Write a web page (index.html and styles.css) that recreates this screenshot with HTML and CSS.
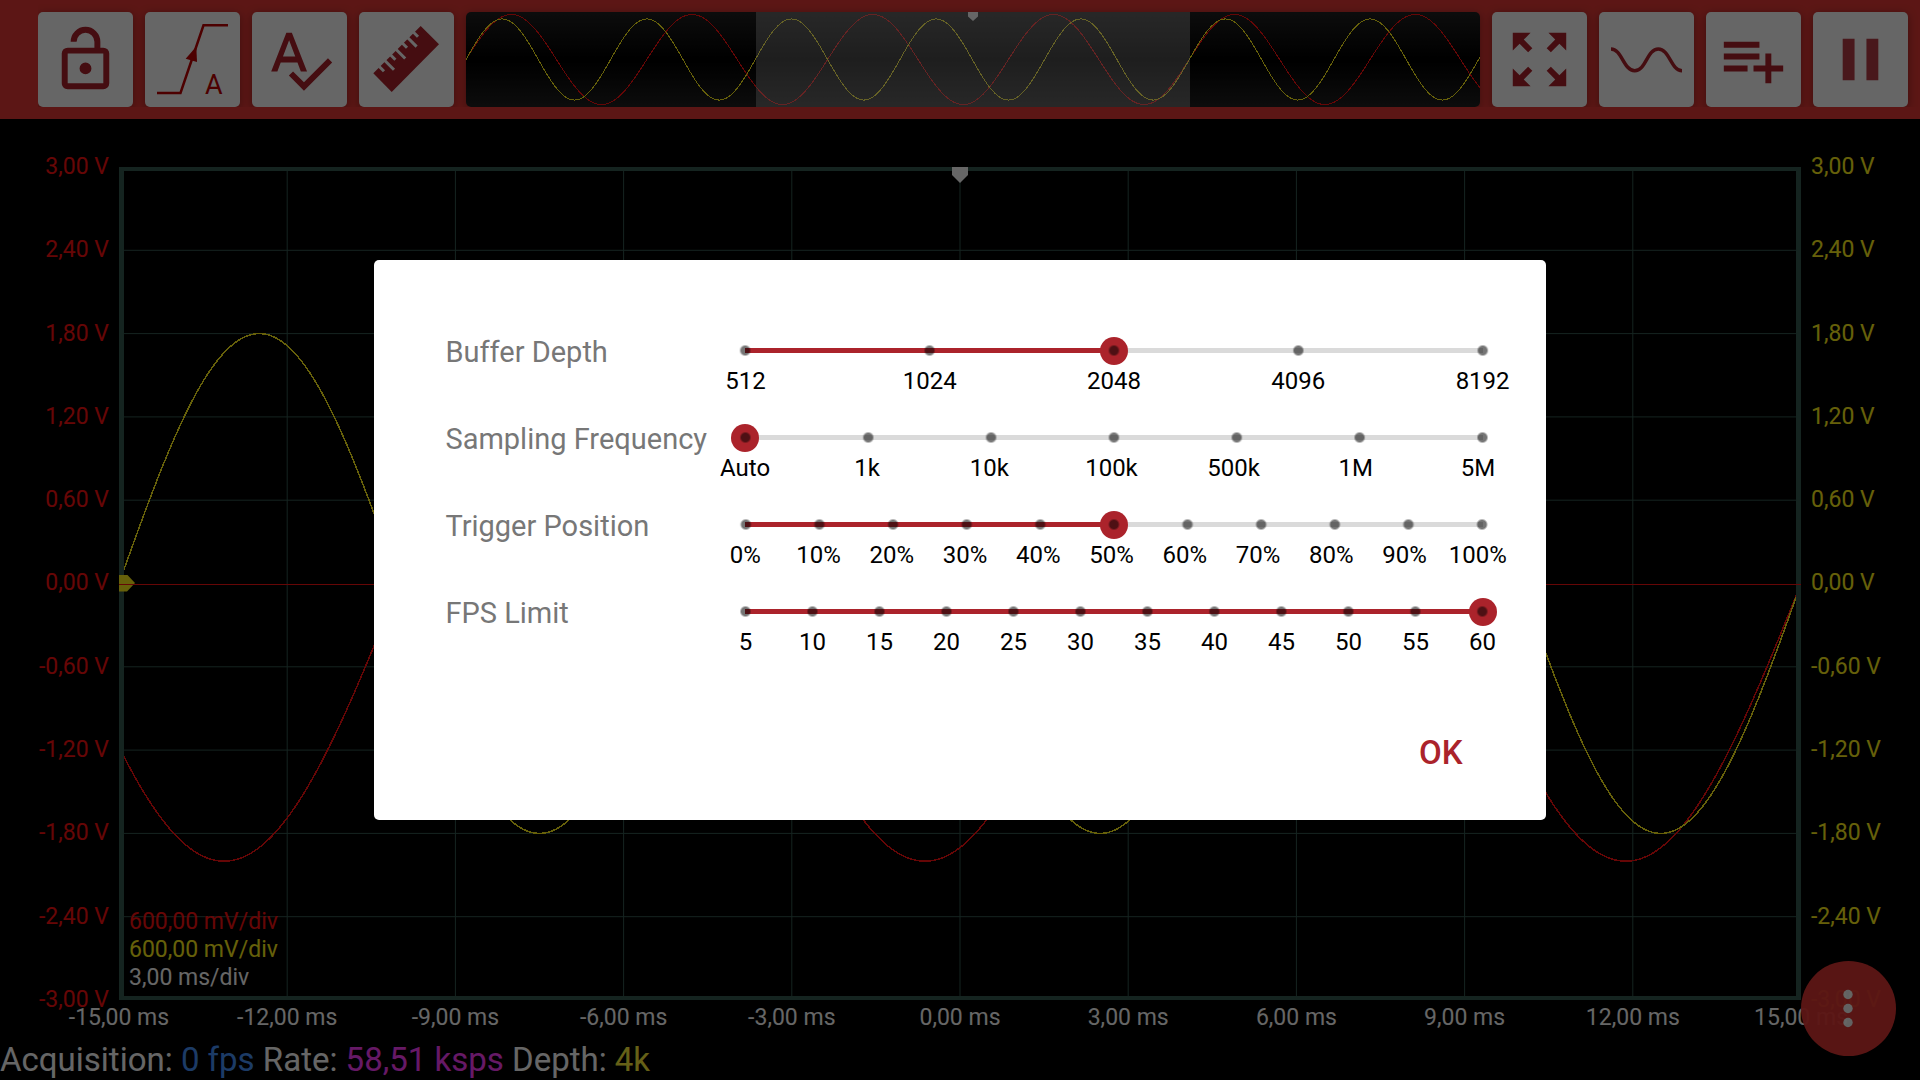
FILE: index.html
```html
<!DOCTYPE html>
<html lang="en">
<head>
<meta charset="utf-8">
<meta name="viewport" content="width=device-width, initial-scale=1">
<title>Oscilloscope</title>
<link rel="stylesheet" href="styles.css">
</head>
<body>
<div class="app">
  <header class="header">
    <div class="toolbar">
      <button class="tool" type="button" aria-label="Unlock">
        <svg class="icon" viewBox="-4 -4 32 32"><path d="M18,20V10H6V20H18M18,8A2,2 0 0,1 20,10V20A2,2 0 0,1 18,22H6C4.89,22 4,21.1 4,20V10A2,2 0 0,1 6,8H15V6A3,3 0 0,0 12,3A3,3 0 0,0 9,6H7A5,5 0 0,1 12,1A5,5 0 0,1 17,6V8H18M12,17A2,2 0 0,1 10,15A2,2 0 0,1 12,13A2,2 0 0,1 14,15A2,2 0 0,1 12,17Z"/></svg>
      </button>
      <button class="tool" type="button" aria-label="Trigger">
        <svg class="icon icon--trigger" viewBox="0 0 95 95"><path class="stroke" d="M12 81H35.5L58.5 13.3H83"/><path d="M51.3 34.6L40.7 46.7L52 50Z"/><text x="60" y="82">A</text></svg>
      </button>
      <button class="tool" type="button" aria-label="Auto setup">
        <svg class="icon" viewBox="-4 -4 32 32"><path d="M21.59,11.59L13.5,19.68L9.83,16L8.42,17.41L13.5,22.5L23,13M6.43,11L8.5,5.5L10.57,11M12.45,16H14.54L9.43,3H7.57L2.46,16H4.55L5.67,13H11.31L12.45,16Z"/></svg>
      </button>
      <button class="tool" type="button" aria-label="Measure">
        <svg class="icon" viewBox="0 0 95 95"><path d="M14.3 61.3L61.7 14L80 32.3L32.7 80Z"/><path class="notch" d="M18.7 53L25 59.3M24.5 47.2L35 57.7M30.2 41.5L36.4 47.7M35.7 36L46.2 46.5M42 29.7L48 35.7M47.3 24.3L57.6 34.6M53 18.7L59 24.7"/></svg>
      </button>
      <div class="preview">
        <svg class="chart" data-chart="preview" viewBox="0 -2.11 70.1 4.22" preserveAspectRatio="none" aria-label="Buffer overview"></svg>
        <div class="preview__window"></div>
        <div class="preview__marker"></div>
      </div>
      <button class="tool" type="button" aria-label="Full screen">
        <svg class="icon" viewBox="-4 -4 32 32"><path d="M15,3L17.3,5.3L14.41,8.17L15.83,9.59L18.7,6.7L21,9V3H15M3,9L5.3,6.7L8.17,9.59L9.59,8.17L6.7,5.3L9,3H3V9M9,21L6.7,18.7L9.59,15.83L8.17,14.41L5.3,17.3L3,15V21H9M21,15L18.7,17.3L15.83,14.41L14.41,15.83L17.3,18.7L15,21H21V15Z"/></svg>
      </button>
      <button class="tool" type="button" aria-label="Signal">
        <svg class="icon icon--sine" viewBox="0 0 95 95"><path class="stroke" d="M12 37C23 37 24.500 58.700 35.700 58.700C47 58.700 48 37 59.300 37C70.500 37 72 58.700 83 58.700"/></svg>
      </button>
      <button class="tool" type="button" aria-label="Add measurement">
        <svg class="icon" viewBox="-4 -4 32 32"><path d="M2,16H10V14H2M18,14V10H16V14H12V16H16V20H18V16H22V14M14,6H2V8H14M14,10H2V12H14V10Z"/></svg>
      </button>
      <button class="tool" type="button" aria-label="Pause">
        <svg class="icon icon--soft" viewBox="-4 -4 32 32"><path d="M14,19H18V5H14M6,19H10V5H6V19Z"/></svg>
      </button>
    </div>
  </header>

  <main class="scope">
    <div class="volts volts--a">
      <span>3,00 V</span><span>2,40 V</span><span>1,80 V</span><span>1,20 V</span><span>0,60 V</span><span>0,00 V</span><span>-0,60 V</span><span>-1,20 V</span><span>-1,80 V</span><span>-2,40 V</span><span>-3,00 V</span>
    </div>
    <div class="plot">
      <svg class="chart" data-chart="main" viewBox="-15 -3 30 6" preserveAspectRatio="none" aria-label="Waveforms"></svg>
      <div class="plot__frame"></div>
      <div class="plot__level"></div>
      <div class="plot__zero"></div>
      <div class="plot__trigger"></div>
      <div class="legend">
        <span class="legend__a">600,00 mV/div</span>
        <span class="legend__b">600,00 mV/div</span>
        <span>3,00 ms/div</span>
      </div>
    </div>
    <div class="volts volts--b">
      <span>3,00 V</span><span>2,40 V</span><span>1,80 V</span><span>1,20 V</span><span>0,60 V</span><span>0,00 V</span><span>-0,60 V</span><span>-1,20 V</span><span>-1,80 V</span><span>-2,40 V</span><span>-3,00 V</span>
    </div>
    <div class="times">
      <span>-15,00 ms</span><span>-12,00 ms</span><span>-9,00 ms</span><span>-6,00 ms</span><span>-3,00 ms</span><span>0,00 ms</span><span>3,00 ms</span><span>6,00 ms</span><span>9,00 ms</span><span>12,00 ms</span><span>15,00 ms</span>
    </div>
  </main>

  <footer class="status">Acquisition: <span class="status__fps">0 fps</span> Rate: <span class="status__rate">58,51 ksps</span> Depth: <span class="status__depth">4k</span></footer>

  <button class="fab" type="button" aria-label="More">
    <svg class="icon" viewBox="0 0 95 95"><circle cx="47" cy="33.500" r="4.700"/><circle cx="47" cy="47.500" r="4.700"/><circle cx="47" cy="61.500" r="4.700"/></svg>
  </button>
</div>

<div class="scrim">
  <dialog class="dialog" open aria-label="Acquisition settings">
    <form class="settings" method="dialog">
      <div class="setting">
        <label class="setting__name" for="depth">Buffer Depth</label>
        <div class="setting__control" style="--steps: 4; --value: 2">
          <div class="slider"><input class="slider__input" id="depth" type="range" min="0" max="4" value="2"></div>
          <div class="ticks"><span>512</span><span>1024</span><span>2048</span><span>4096</span><span>8192</span></div>
        </div>
      </div>
      <div class="setting">
        <label class="setting__name" for="frequency">Sampling Frequency</label>
        <div class="setting__control" style="--steps: 6; --value: 0">
          <div class="slider"><input class="slider__input" id="frequency" type="range" min="0" max="6" value="0"></div>
          <div class="ticks ticks--compact"><span>Auto</span><span>1k</span><span>10k</span><span>100k</span><span>500k</span><span>1M</span><span>5M</span></div>
        </div>
      </div>
      <div class="setting">
        <label class="setting__name" for="position">Trigger Position</label>
        <div class="setting__control" style="--steps: 10; --value: 5">
          <div class="slider"><input class="slider__input" id="position" type="range" min="0" max="10" value="5"></div>
          <div class="ticks ticks--compact"><span>0%</span><span>10%</span><span>20%</span><span>30%</span><span>40%</span><span>50%</span><span>60%</span><span>70%</span><span>80%</span><span>90%</span><span>100%</span></div>
        </div>
      </div>
      <div class="setting">
        <label class="setting__name" for="fps">FPS Limit</label>
        <div class="setting__control" style="--steps: 11; --value: 11">
          <div class="slider"><input class="slider__input" id="fps" type="range" min="0" max="11" value="11"></div>
          <div class="ticks"><span>5</span><span>10</span><span>15</span><span>20</span><span>25</span><span>30</span><span>35</span><span>40</span><span>45</span><span>50</span><span>55</span><span>60</span></div>
        </div>
      </div>
      <div class="actions"><button class="ok" type="submit">OK</button></div>
    </form>
  </dialog>
</div>
<script src="script.js"></script>
</body>
</html>
```
FILE: styles.css
```css
:root {
  --accent: #ab232b;
  --header: #e53935;
  --grid: #365a52;
  --channel-a: #ff1010;
  --channel-b: #fff01a;
  --gutter: 119px;
}

*,
*::before,
*::after {
  box-sizing: border-box;
}

body {
  margin: 0;
  background: #000;
  color: #fff;
  font-family: Roboto, "Liberation Sans", sans-serif;
  font-size: 24px;
}

button {
  padding: 0;
  border: 0;
  font: inherit;
  cursor: pointer;
}

.app {
  display: grid;
  grid-template-rows: auto 1fr auto;
  min-height: 100vh;
  overflow: hidden;
}

/* Toolbar */

.header {
  padding: 0 0 12px 38px;
  background: var(--header);
}

.toolbar {
  display: flex;
  gap: 12px;
  padding: 12px 12px 0 0;
  overflow: hidden;
}

.tool,
.preview {
  height: 95px;
  border-radius: 5px;
  box-shadow: 0 2px 10px rgba(0, 0, 0, 0.35);
}

.tool {
  flex: none;
  width: 95px;
  background: #fff;
}

.icon {
  display: block;
  width: 100%;
  height: 100%;
  fill: #ad222b;
}

.stroke {
  fill: none;
  stroke: #ad222b;
  stroke-width: 3.5;
}

.notch {
  stroke: #fff;
  stroke-width: 3;
}

.icon--trigger {
  fill: #c00000;
  font-size: 27px;
}

.icon--trigger .stroke {
  stroke: #c00000;
  stroke-width: 2.5;
}

.icon--soft {
  opacity: 0.87;
}

.preview {
  position: relative;
  flex: 1;
  min-width: 0;
  overflow: hidden;
  background: linear-gradient(#202020, #000, #202020);
}

.preview__window {
  position: absolute;
  inset: 0 28.6%;
  background: rgba(255, 255, 255, 0.3);
}

.preview__marker {
  position: absolute;
  top: 0;
  left: calc(50% - 5px);
  width: 10px;
  height: 9px;
  background: #fff;
  clip-path: polygon(0 0, 100% 0, 100% 50%, 50% 100%, 0 50%);
}

/* Scope */

.scope {
  display: grid;
  grid-template: 1fr 40px / var(--gutter) 1fr var(--gutter);
  padding-top: 48px;
  font-size: 23px;
}

.chart {
  display: block;
  position: absolute;
  inset: 0;
  width: 100%;
  height: 100%;
  overflow: hidden;
  fill: none;
  shape-rendering: crispEdges;
}

.chart path {
  vector-effect: non-scaling-stroke;
  stroke-width: 1px;
}

.line--grid {
  stroke: var(--grid);
}

.line--a {
  stroke: var(--channel-a);
}

.line--b {
  stroke: var(--channel-b);
}

.plot .line--a,
.plot .line--b {
  stroke-width: 1.5px;
}

.volts {
  display: flex;
  flex-direction: column;
  justify-content: space-between;
  margin: -12px 0;
  padding: 0 10px;
  line-height: 24px;
}

.volts--a {
  align-items: flex-end;
  color: var(--channel-a);
}

.volts--b {
  align-items: flex-start;
  color: var(--channel-b);
}

.plot {
  position: relative;
}

.plot__frame {
  position: absolute;
  inset: 0;
  border: 4px solid var(--grid);
  border-width: 4px 5px;
}

.plot__level {
  position: absolute;
  left: 0;
  top: calc(50% - 9px);
  width: 16px;
  height: 17px;
  background: var(--channel-b);
  clip-path: polygon(0 0, 50% 0, 100% 50%, 50% 100%, 0 100%);
}

.plot__zero {
  position: absolute;
  inset: 50% 0 auto;
  height: 1px;
  background: var(--channel-a);
}

.plot__trigger {
  position: absolute;
  top: 0;
  left: calc(50% - 8px);
  width: 16px;
  height: 16px;
  background: #fff;
  clip-path: polygon(0 0, 100% 0, 100% 50%, 50% 100%, 0 50%);
}

.legend {
  position: absolute;
  left: 10px;
  bottom: 8px;
  display: flex;
  flex-direction: column;
  line-height: 28px;
}

.legend__a {
  color: var(--channel-a);
}

.legend__b {
  color: var(--channel-b);
}

.times {
  grid-column: 2;
  display: flex;
  margin: 0 -5%;
  line-height: 36px;
}

.times span {
  flex: 1 0 0;
  text-align: center;
  white-space: nowrap;
}

.status {
  font-size: 33px;
  line-height: 40px;
}

.status__fps {
  color: #4895ff;
}

.status__rate {
  color: #ff40ff;
}

.status__depth {
  color: #fff03b;
}

.fab {
  position: fixed;
  right: 24px;
  bottom: 24px;
  width: 95px;
  height: 95px;
  border-radius: 50%;
  background: var(--header);
  opacity: 0.96;
}

.fab .icon {
  fill: #fff;
}

/* Dialog */

.scrim {
  position: fixed;
  inset: 0;
  display: flex;
  align-items: center;
  justify-content: center;
  background: rgba(0, 0, 0, 0.6);
}

.dialog {
  position: static;
  width: 61%;
  margin: 0;
  padding: 76px 63px 37px 71px;
  border: 0;
  border-radius: 5px;
  background: #fff;
  color: #000;
}

.settings {
  display: flex;
  flex-direction: column;
  gap: 26px;
}

.setting {
  display: grid;
  grid-template-columns: 300px 1fr;
}

.setting__name {
  color: #777;
  font-size: 29px;
  line-height: 33px;
  white-space: nowrap;
}

.setting__control {
  --pitch: calc(100% / var(--steps));
}

.slider {
  position: relative;
  height: 29px;
  background:
    linear-gradient(var(--accent), var(--accent)) 0 12px / calc(var(--pitch) * var(--value)) 5px no-repeat,
    linear-gradient(#dadada, #dadada) 0 12px / 100% 5px no-repeat;
}

/* Step dots, drawn over the thumb */
.slider::after {
  content: "";
  position: absolute;
  inset: 0 calc(var(--pitch) / -2);
  background: radial-gradient(circle, rgba(0, 0, 0, 0.54) 4px, transparent 6px) 0 0 / calc(100% / (var(--steps) + 1)) 100%;
  pointer-events: none;
}

.slider__input {
  appearance: none;
  display: block;
  width: calc(100% + 28px);
  height: 29px;
  margin: 0 -14px;
  background: none;
}

.slider__input::-webkit-slider-thumb {
  appearance: none;
  width: 28px;
  height: 28px;
  border-radius: 50%;
  background: var(--accent);
}

.ticks {
  display: flex;
  margin: 0 calc(var(--pitch) / -2);
  line-height: 32px;
}

.ticks--compact {
  padding-right: 5px;
}

.ticks span {
  flex: 1 0 0;
  width: 0;
  display: flex;
  justify-content: center;
}

.actions {
  display: flex;
  justify-content: flex-end;
  padding-top: 39px;
}

.ok {
  padding: 0 20px;
  background: none;
  color: var(--accent);
  font-size: 33px;
  font-weight: 500;
  line-height: 60px;
}
```
FILE: script.js
```js
function sine(from, to, amplitude, period, start) {
  let d = "";
  for (let i = 0; i <= 1000; i++) {
    const t = from + ((to - from) * i) / 1000;
    const y = -amplitude * Math.sin((2 * Math.PI * (t - start)) / period);
    d += (i ? "L" : "M") + t.toFixed(4) + " " + y.toFixed(4);
  }
  return d;
}

function draw(chart, className, d) {
  const path = document.createElementNS("http://www.w3.org/2000/svg", "path");
  path.setAttribute("class", className);
  path.setAttribute("d", d);
  document.querySelector('[data-chart="' + chart + '"]').append(path);
}

/* The middle row is left out: the zero line takes its place */
let grid = "";
for (let i = 1; i < 10; i++) {
  grid += "M" + (i * 3 - 15) + " -3V3";
  if (i !== 5) grid += "M-15 " + (i * 0.6 - 3).toFixed(1) + "H15";
}

draw("main", "line--grid", grid);
draw("main", "line--a", sine(-15, 15, 2, 12.5, 15));
draw("main", "line--b", sine(-15, 15, 1.8, 10, -15));
draw("preview", "line--a", sine(0, 70.1, 2, 12.5, 0));
draw("preview", "line--b", sine(0, 70.1, 1.8, 10, 0));

document.querySelectorAll(".slider__input").forEach((input) => {
  input.addEventListener("input", () => {
    input.closest(".setting__control").style.setProperty("--value", input.value);
  });
});
```
